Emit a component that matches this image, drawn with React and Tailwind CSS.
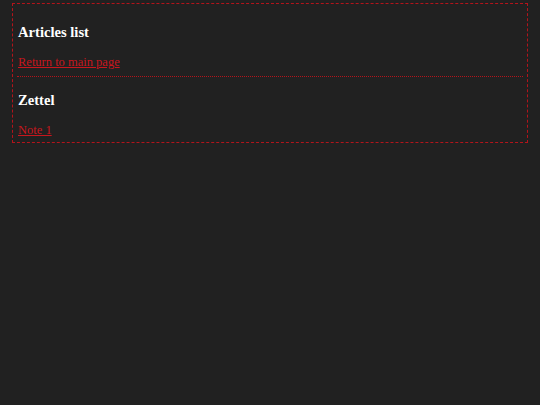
export default function App() {
  return (
    <div className="min-h-[405px] w-full bg-[#212121] pt-[3px] px-[12px] font-['Liberation_Serif',serif]">
      <div className="border border-dashed border-[#b3141b] px-[5px] pt-[20px] pb-[5px]">
        <h3 className="text-[14.6px] leading-[16px] font-bold text-white">Articles list</h3>
        <a href="#" className="block mt-[15px] text-[12.5px] leading-[14px] text-[#c8161d] underline">Return to main page</a>
        <div className="mt-[7px] -mx-[1px] border-t border-dotted border-[#b3141b]" />
        <h3 className="mt-[15px] text-[14.6px] leading-[16px] font-bold text-white">Zettel</h3>
        <a href="#" className="block mt-[15px] w-fit text-[12.5px] leading-[14px] text-[#c8161d] underline">Note 1</a>
      </div>
    </div>
  );
}
